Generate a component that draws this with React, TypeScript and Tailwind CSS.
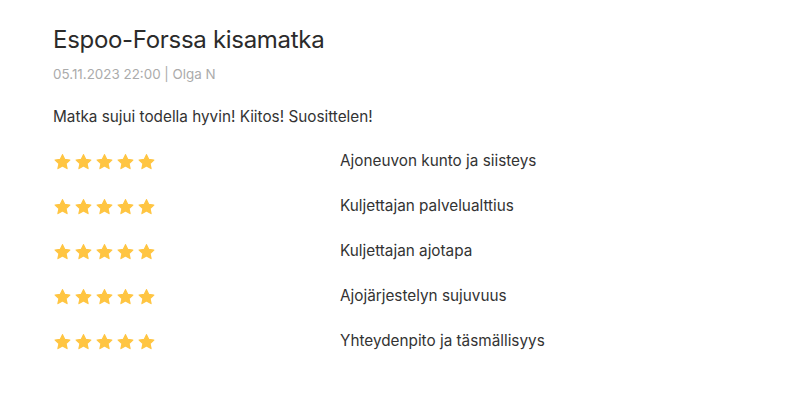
import React from "react";

const Star = () => (
  <svg width="19" height="18" viewBox="0 0 24 24" className="shrink-0">
    <path
      d="M12 2.2l2.95 6.3 6.85.8-5.05 4.7 1.35 6.8L12 17.4l-6.1 3.4 1.35-6.8L2.2 9.3l6.85-.8z"
      fill="#FFC542"
      stroke="#FFC542"
      strokeWidth="1.6"
      strokeLinejoin="round"
    />
  </svg>
);

const rows = [
  "Ajoneuvon kunto ja siisteys",
  "Kuljettajan palvelualttius",
  "Kuljettajan ajotapa",
  "Ajojärjestelyn sujuvuus",
  "Yhteydenpito ja täsmällisyys",
];

export default function App() {
  return (
    <div
      className="w-[800px] h-[400px] bg-white pl-[53px] pt-[25px] text-[#333]"
      style={{ fontFamily: "Inter, 'Noto Sans', sans-serif" }}
    >
      <h1 className="text-[24px] leading-[30px] text-[#2b2b2b] tracking-[-0.3px]">Espoo-Forssa kisamatka</h1>
      <div className="mt-[9px] text-[13.4px] leading-[20px] text-[#ababab]">05.11.2023 22:00 | Olga N</div>
      <p className="mt-[23px] text-[15.3px] leading-[20px] text-[#333]">Matka sujui todella hyvin! Kiitos! Suosittelen!</p>
      <div className="mt-[12px] flex flex-col">
        {rows.map((r) => (
          <div key={r} className="flex items-center h-[45px]">
            <div className="w-[287px] flex gap-[2px]">
              <Star />
              <Star />
              <Star />
              <Star />
              <Star />
            </div>
            <span className="text-[15.3px] text-[#333]">{r}</span>
          </div>
        ))}
      </div>
    </div>
  );
}
